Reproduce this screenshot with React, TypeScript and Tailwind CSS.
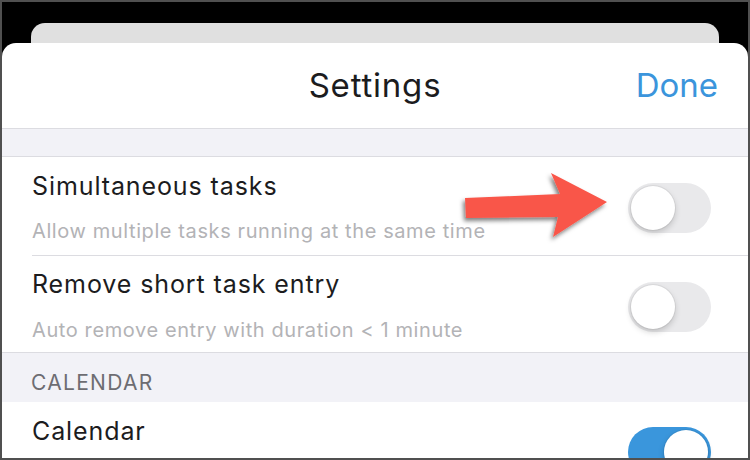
import React from "react";

function Toggle({ on }: { on?: boolean }) {
  return (
    <div
      className={
        "relative h-[50px] w-[83px] shrink-0 rounded-full " +
        (on ? "bg-[#3a96dc]" : "bg-[#e9e9eb]")
      }
    >
      <div
        className={
          "absolute top-[3px] h-[44px] w-[44px] rounded-full bg-white shadow-[0_3px_6px_rgba(0,0,0,0.18),0_0_0_1px_rgba(0,0,0,0.05)] " +
          (on ? "right-[3px]" : "left-[3px]")
        }
      />
    </div>
  );
}

export default function App() {
  const font = { fontFamily: "Inter, 'Noto Sans', sans-serif" };
  return (
    <div
      className="relative h-[460px] w-[750px] overflow-hidden border-2 border-[#505050] bg-black"
      style={font}
    >
      <div className="mx-[29px] mt-[21px] h-[20px] rounded-t-[14px] bg-[#e0e0e0]" />
      <div className="flex h-[415px] flex-col overflow-hidden rounded-t-[14px] bg-white">
        <div className="relative flex h-[85px] shrink-0 items-center justify-center">
          <span className="text-[33px] leading-none tracking-[0.8px] text-[#1c1c1e]">Settings</span>
          <span className="absolute right-[30px] text-[33px] leading-none text-[#3b95dc]">Done</span>
        </div>
        <div className="h-[29px] shrink-0 border-y border-[#dcdce1] bg-[#f2f2f7]" />
        <div className="flex shrink-0 pl-[30px]">
          <div className="flex h-[99px] flex-1 items-start justify-between border-b border-[#dcdce1] pr-[37px]">
            <div className="pt-[14px]">
              <div className="text-[25px] leading-[30px] tracking-[0.9px] text-[#1c1c1e]">Simultaneous tasks</div>
              <div className="mt-[18px] text-[20px] leading-[24px] tracking-[0.6px] text-[#b3b3b6]">
                Allow multiple tasks running at the same time
              </div>
            </div>
            <div className="pt-[26px]">
              <Toggle />
            </div>
          </div>
        </div>
        <div className="flex h-[97px] shrink-0 items-start justify-between border-b border-[#dcdce1] pl-[30px] pr-[37px]">
          <div className="pt-[13px]">
            <div className="text-[25px] leading-[30px] tracking-[0.9px] text-[#1c1c1e]">Remove short task entry</div>
            <div className="mt-[19px] text-[20px] leading-[24px] tracking-[0.6px] text-[#b3b3b6]">
              Auto remove entry with duration &lt; 1 minute
            </div>
          </div>
          <div className="pt-[26px]">
            <Toggle />
          </div>
        </div>
        <div className="h-[49px] shrink-0 bg-[#f2f2f7] pl-[29px] pt-[17px]">
          <div className="text-[21px] leading-[25px] tracking-[1.3px] text-[#6d6d72]">CALENDAR</div>
        </div>
        <div className="flex flex-1 items-start justify-between pl-[30px] pr-[37px]">
          <div className="pt-[14px]">
            <div className="text-[25px] leading-[30px] tracking-[0.9px] text-[#1c1c1e]">Calendar</div>
          </div>
          <div className="pt-[25px]">
            <Toggle on />
          </div>
        </div>
      </div>
      <svg
        className="pointer-events-none absolute left-[-2px] top-[-2px]"
        width="750"
        height="460"
        viewBox="0 0 750 460"
      >
        <defs>
          <filter id="sh" x="-20%" y="-20%" width="140%" height="160%">
            <feDropShadow dx="-2" dy="3" stdDeviation="2" floodColor="#000" floodOpacity="0.5" />
          </filter>
        </defs>
        <polygon
          points="465,198 560,194 551,173 607,202 553,237 558,217 466,218"
          fill="#f9564a"
          filter="url(#sh)"
        />
      </svg>
    </div>
  );
}
